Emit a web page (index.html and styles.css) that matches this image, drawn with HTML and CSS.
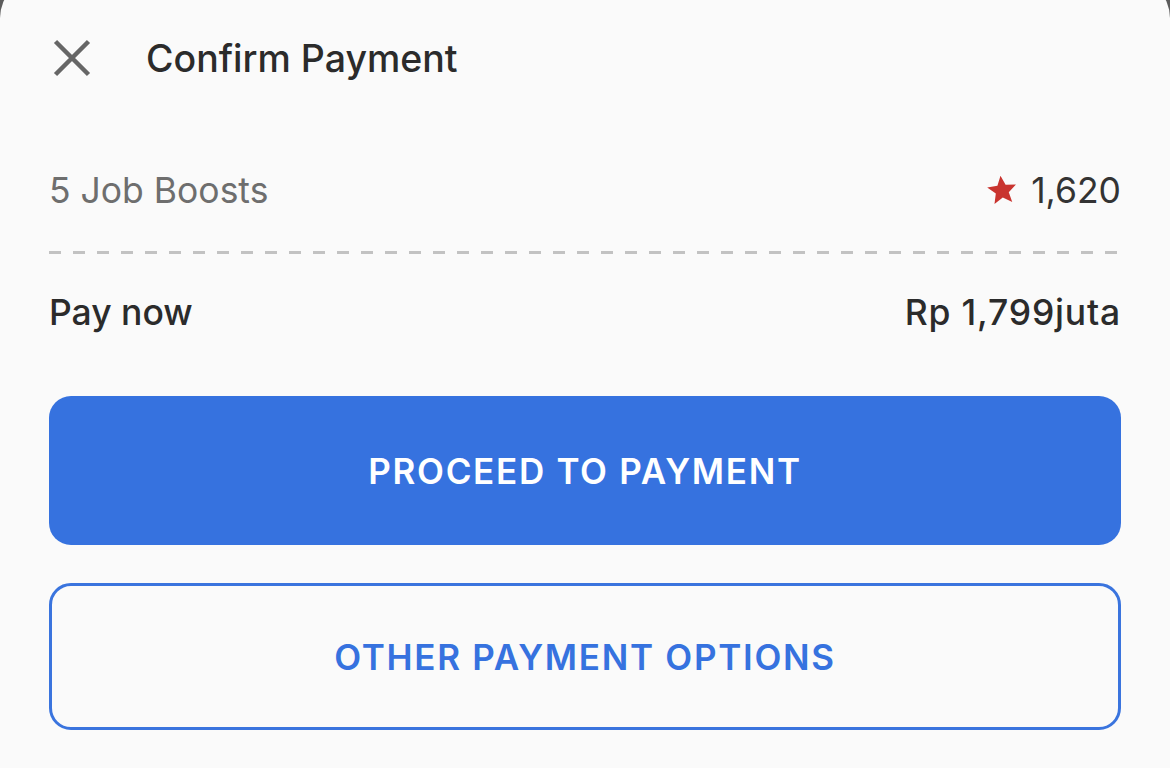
FILE: index.html
```html
<!DOCTYPE html>
<html lang="en">

<head>
    <meta charset="UTF-8">
    <meta name="viewport" content="width=device-width, initial-scale=1.0">
    <title>Confirm Payment</title>
    <link rel="stylesheet" href="styles.css">
</head>

<body>
    <div class="sheet">
        <div class="sheet-header">
            <button class="close-btn" type="button" aria-label="Close">
                <svg width="40" height="40" viewBox="0 0 40 40">
                    <path d="M3.5 3.5 L36.5 36.5 M36.5 3.5 L3.5 36.5" stroke="#666" stroke-width="4.5" fill="none" />
                </svg>
            </button>
            <h1 class="sheet-title">Confirm Payment</h1>
        </div>

        <div class="row row-item">
            <span class="item-name">5 Job Boosts</span>
            <span class="item-price">
                <svg class="star" width="34" height="34" viewBox="0 0 24 24">
                    <path d="M12 1.8 L14.9 8.6 L22.2 9.2 L16.6 14 L18.3 21.2 L12 17.4 L5.7 21.2 L7.4 14 L1.8 9.2 L9.1 8.6 Z" fill="#c9342f" />
                </svg>
                1,620
            </span>
        </div>

        <div class="divider"></div>

        <div class="row row-total">
            <span>Pay now</span>
            <span class="total-amount">Rp 1,799juta</span>
        </div>

        <button class="btn btn-primary" type="button">Proceed to payment</button>
        <button class="btn btn-outline" type="button">Other payment options</button>
    </div>
</body>

</html>
```

FILE: styles.css
```css
html,
body {
    height: 100%;
}

body {
    margin: 0;
    background-color: #5c5c5c;
    font-family: Inter, "Noto Sans", sans-serif;
    overflow: hidden;
}

.sheet {
    box-sizing: border-box;
    height: calc(100% + 22px);
    margin-top: -22px;
    padding: 22px 49px 0;
    background-color: #fafafa;
    border-radius: 40px 40px 0 0;
}

.sheet-header {
    display: flex;
    align-items: center;
    height: 116px;
}

.close-btn {
    display: flex;
    padding: 0;
    margin-left: 3px;
    border: none;
    background: none;
    cursor: pointer;
}

.sheet-title {
    margin: 0 0 0 54px;
    font-size: 37.5px;
    font-weight: 500;
    color: #2b2b2b;
}

.row {
    display: flex;
    align-items: center;
    justify-content: space-between;
    height: 80px;
    font-size: 35.5px;
}

.row-item {
    margin-top: 34px;
}

.item-name {
    color: #6e6e6e;
}

.item-price {
    display: flex;
    align-items: center;
    gap: 12px;
    color: #333;
}

.star {
    transform: rotate(-6deg);
}

.divider {
    margin-top: 21px;
    height: 3px;
    background-image: linear-gradient(to right, #c2c2c2 12px, transparent 12px);
    background-size: 24px 3px;
}

.row-total {
    margin-top: 18px;
    font-weight: 500;
    color: #2b2b2b;
}

.total-amount {
    letter-spacing: 0.8px;
}

.btn {
    display: block;
    width: 100%;
    border-radius: 22px;
    font-family: inherit;
    font-size: 35px;
    font-weight: 600;
    letter-spacing: 1.7px;
    text-transform: uppercase;
    cursor: pointer;
}

.btn-primary {
    margin-top: 44px;
    height: 149px;
    border: none;
    background-color: #3672df;
    color: #fff;
}

.btn-outline {
    margin-top: 38px;
    height: 147px;
    border: 3px solid #3a74de;
    background-color: #fafafa;
    color: #3672df;
}
```
